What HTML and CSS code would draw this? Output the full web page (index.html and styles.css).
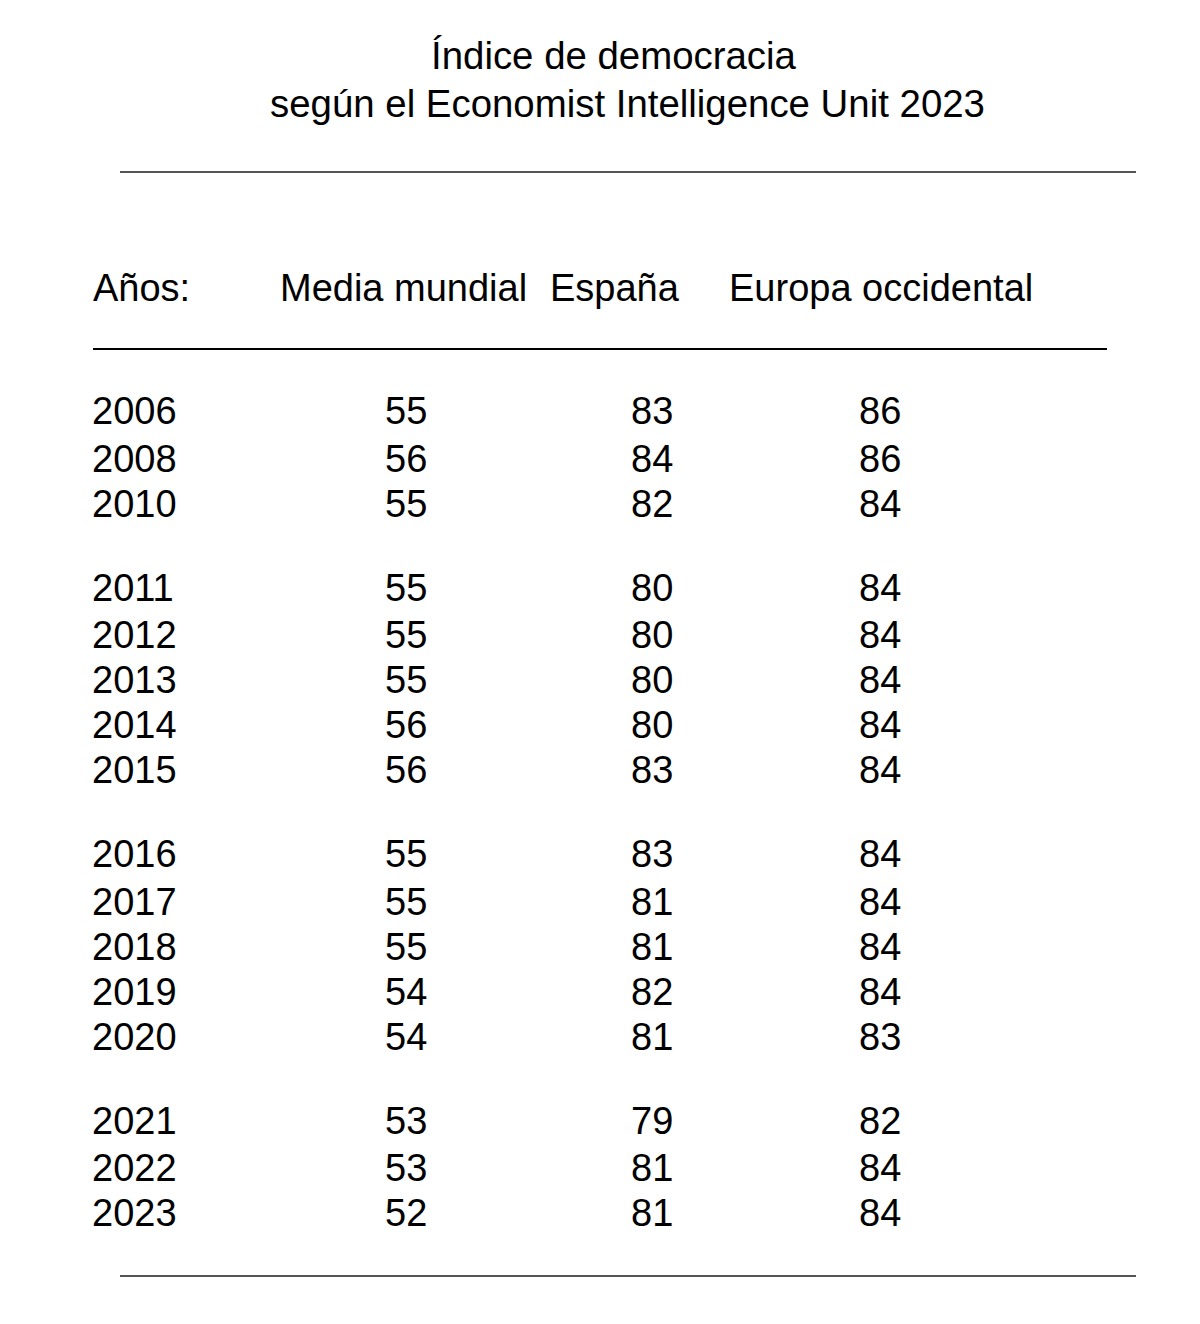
FILE: index.html
```html
<!DOCTYPE html>
<html lang="es">
<head>
<meta charset="utf-8">
<title>Índice de democracia</title>
<link rel="stylesheet" href="styles.css">
</head>
<body>
<div class="page">
  <div class="title">
    <div class="title-l1">Índice de democracia</div>
    <div class="title-l2">según el Economist Intelligence Unit 2023</div>
  </div>
  <div class="rule rule-outer rule-top"></div>
  <div class="head">
    <div>Años:</div>
    <div>Media mundial</div>
    <div>España</div>
    <div>Europa occidental</div>
  </div>
  <div class="rule rule-head"></div>
  <div class="data">
    <div class="group">
      <div class="row"><div>2006</div><div>55</div><div>83</div><div>86</div></div>
      <div class="row"><div>2008</div><div>56</div><div>84</div><div>86</div></div>
      <div class="row"><div>2010</div><div>55</div><div>82</div><div>84</div></div>
    </div>
    <div class="group">
      <div class="row"><div>2011</div><div>55</div><div>80</div><div>84</div></div>
      <div class="row"><div>2012</div><div>55</div><div>80</div><div>84</div></div>
      <div class="row"><div>2013</div><div>55</div><div>80</div><div>84</div></div>
      <div class="row"><div>2014</div><div>56</div><div>80</div><div>84</div></div>
      <div class="row"><div>2015</div><div>56</div><div>83</div><div>84</div></div>
    </div>
    <div class="group">
      <div class="row"><div>2016</div><div>55</div><div>83</div><div>84</div></div>
      <div class="row"><div>2017</div><div>55</div><div>81</div><div>84</div></div>
      <div class="row"><div>2018</div><div>55</div><div>81</div><div>84</div></div>
      <div class="row"><div>2019</div><div>54</div><div>82</div><div>84</div></div>
      <div class="row"><div>2020</div><div>54</div><div>81</div><div>83</div></div>
    </div>
    <div class="group">
      <div class="row"><div>2021</div><div>53</div><div>79</div><div>82</div></div>
      <div class="row"><div>2022</div><div>53</div><div>81</div><div>84</div></div>
      <div class="row"><div>2023</div><div>52</div><div>81</div><div>84</div></div>
    </div>
  </div>
  <div class="rule rule-outer rule-bottom"></div>
</div>
</body>
</html>
```

FILE: styles.css
```css
html, body {
  margin: 0;
  padding: 0;
  background: #ffffff;
}

.page {
  width: 1200px;
  height: 1324px;
  font-family: "Liberation Sans", Arial, Helvetica, sans-serif;
  font-size: 38px;
  color: #000000;
  overflow: hidden;
  display: flow-root;
}

.title {
  padding-top: 32px;
  padding-left: 55px;
  font-size: 38.4px;
  line-height: 48px;
  text-align: center;
}

.title-l1 {
  padding-right: 28px;
}

.rule {
  height: 2px;
}

.rule-outer {
  margin-left: 120px;
  width: 1016px;
  background: #555555;
}

.rule-top {
  margin-top: 43px;
}

.rule-head {
  margin-top: 37px;
  margin-left: 93px;
  width: 1014px;
  background: #000000;
}

.head {
  margin-top: 93px;
  padding-left: 93px;
  display: grid;
  grid-template-columns: 187px 270px 179px auto;
  line-height: 45px;
  white-space: nowrap;
}

.data {
  padding-top: 39px;
}

.group {
  display: flex;
  flex-direction: column;
}

.group + .group {
  margin-top: 39px;
}

.row {
  padding-left: 92px;
  display: grid;
  grid-template-columns: 293px 246px 228px auto;
  line-height: 45px;
}

.row:first-child {
  margin-bottom: 2.5px;
}

.rule-bottom {
  margin-top: 39px;
}
```
